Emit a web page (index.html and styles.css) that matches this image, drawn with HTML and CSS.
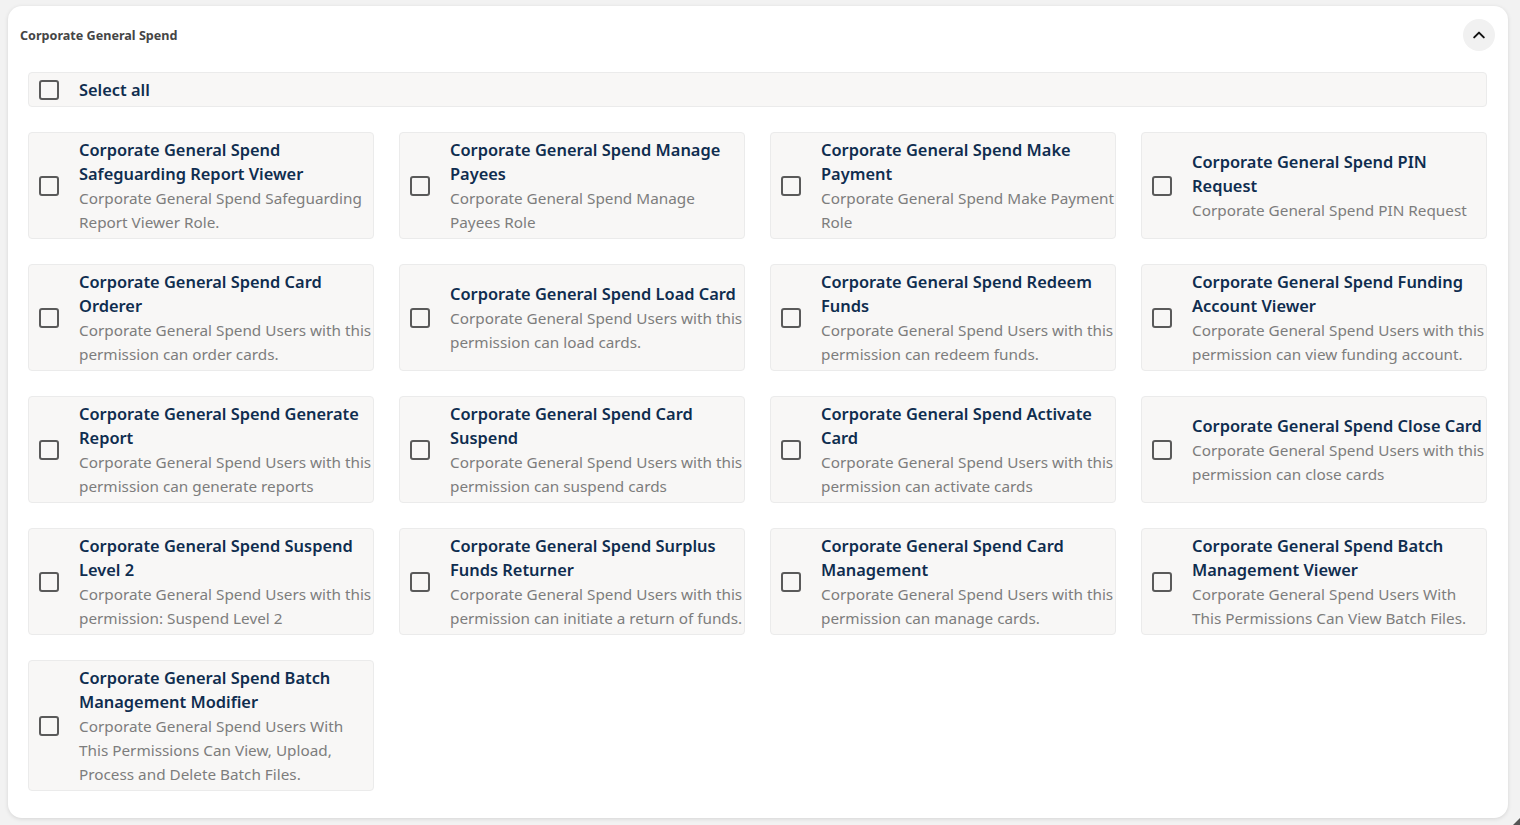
FILE: index.html
```html
<!DOCTYPE html>
<html>
<head>
<meta charset="utf-8">
<link rel="stylesheet" href="styles.css">
</head>
<body>
<div class="panel">
  <div class="panel-head">
    <span class="panel-title">Corporate General Spend</span>
    <button class="toggle" type="button" aria-label="Collapse">
      <svg width="14" height="14" viewBox="0 0 14 14"><path d="M2.2 9.4 L7 4.6 L11.8 9.4" fill="none" stroke="#111" stroke-width="2" stroke-linecap="round" stroke-linejoin="round"/></svg>
    </button>
  </div>
  <div class="select-all">
    <span class="box"></span>
    <span class="select-label">Select all</span>
  </div>
  <div class="grid">
    <div class="item"><span class="box"></span><div class="text"><div class="name">Corporate General Spend Safeguarding Report Viewer</div><div class="desc">Corporate General Spend Safeguarding Report Viewer Role.</div></div></div>
    <div class="item"><span class="box"></span><div class="text"><div class="name">Corporate General Spend Manage Payees</div><div class="desc">Corporate General Spend Manage Payees Role</div></div></div>
    <div class="item"><span class="box"></span><div class="text"><div class="name">Corporate General Spend Make Payment</div><div class="desc">Corporate General Spend Make Payment Role</div></div></div>
    <div class="item"><span class="box"></span><div class="text"><div class="name">Corporate General Spend PIN Request</div><div class="desc">Corporate General Spend PIN Request</div></div></div>

    <div class="item"><span class="box"></span><div class="text"><div class="name">Corporate General Spend Card Orderer</div><div class="desc">Corporate General Spend Users with this permission can order cards.</div></div></div>
    <div class="item"><span class="box"></span><div class="text"><div class="name">Corporate General Spend Load Card</div><div class="desc">Corporate General Spend Users with this permission can load cards.</div></div></div>
    <div class="item"><span class="box"></span><div class="text"><div class="name">Corporate General Spend Redeem Funds</div><div class="desc">Corporate General Spend Users with this permission can redeem funds.</div></div></div>
    <div class="item"><span class="box"></span><div class="text"><div class="name">Corporate General Spend Funding Account Viewer</div><div class="desc">Corporate General Spend Users with this permission can view funding account.</div></div></div>

    <div class="item"><span class="box"></span><div class="text"><div class="name">Corporate General Spend Generate Report</div><div class="desc">Corporate General Spend Users with this permission can generate reports</div></div></div>
    <div class="item"><span class="box"></span><div class="text"><div class="name">Corporate General Spend Card Suspend</div><div class="desc">Corporate General Spend Users with this permission can suspend cards</div></div></div>
    <div class="item"><span class="box"></span><div class="text"><div class="name">Corporate General Spend Activate Card</div><div class="desc">Corporate General Spend Users with this permission can activate cards</div></div></div>
    <div class="item"><span class="box"></span><div class="text"><div class="name">Corporate General Spend Close Card</div><div class="desc">Corporate General Spend Users with this permission can close cards</div></div></div>

    <div class="item"><span class="box"></span><div class="text"><div class="name">Corporate General Spend Suspend Level 2</div><div class="desc">Corporate General Spend Users with this permission: Suspend Level 2</div></div></div>
    <div class="item"><span class="box"></span><div class="text"><div class="name">Corporate General Spend Surplus Funds Returner</div><div class="desc">Corporate General Spend Users with this permission can initiate a return of funds.</div></div></div>
    <div class="item"><span class="box"></span><div class="text"><div class="name">Corporate General Spend Card Management</div><div class="desc">Corporate General Spend Users with this permission can manage cards.</div></div></div>
    <div class="item"><span class="box"></span><div class="text"><div class="name">Corporate General Spend Batch Management Viewer</div><div class="desc">Corporate General Spend Users With This Permissions Can View Batch Files.</div></div></div>

    <div class="item"><span class="box"></span><div class="text"><div class="name">Corporate General Spend Batch Management Modifier</div><div class="desc">Corporate General Spend Users With This Permissions Can View, Upload, Process and Delete Batch Files.</div></div></div>
  </div>
</div>
<div class="resize-mark"></div>
</body>
</html>
```

FILE: styles.css
```css
* { box-sizing: border-box; }
html, body { margin: 0; padding: 0; }
body {
  background: #f2f2f2;
  font-family: "Noto Sans", "Open Sans", sans-serif;
  width: 1520px;
  height: 825px;
  overflow: hidden;
  position: relative;
}
.panel {
  margin: 6px 0 0 8px;
  width: 1500px;
  height: 812px;
  background: #fff;
  border-radius: 14px;
  box-shadow: 0 1px 4px rgba(0,0,0,0.12);
  padding: 0 12px;
}
.panel-head {
  height: 58px;
  display: flex;
  align-items: center;
  justify-content: space-between;
}
.panel-title {
  font-size: 12.6px;
  font-weight: 700;
  color: #454545;
}
.toggle {
  width: 32px;
  height: 32px;
  border-radius: 50%;
  border: none;
  background: #f1f1f1;
  display: flex;
  align-items: center;
  justify-content: center;
  padding: 0;
  margin-right: 1px;
}
.select-all {
  margin: 8px 0 0 8px;
  width: 1459px;
  height: 35px;
  background: #f8f7f6;
  border: 1px solid #ebebeb;
  border-radius: 4px;
  display: flex;
  align-items: center;
  padding-left: 10px;
}
.box {
  flex: none;
  width: 20px;
  height: 20px;
  border: 2px solid #5a5a5a;
  border-radius: 3px;
  background: transparent;
}
.select-label {
  margin-left: 20px;
  font-size: 16.4px;
  font-weight: 600;
  color: #0f2d4f;
}
.grid {
  margin: 25px 0 0 8px;
  width: 1459px;
  display: grid;
  grid-template-columns: repeat(4, 346px);
  column-gap: 25px;
  row-gap: 25px;
}
.item {
  background: #f8f7f6;
  border: 1px solid #ebebeb;
  border-radius: 4px;
  display: flex;
  align-items: center;
  padding: 5px 0 4px 10px;
}
.text {
  margin-left: 20px;
  line-height: 24px;
}
.name {
  font-size: 16.4px;
  font-weight: 600;
  color: #0f2d4f;
}
.desc {
  font-size: 15.3px;
  font-weight: 400;
  color: #7d7d7d;
}
.resize-mark {
  position: absolute;
  right: 0;
  bottom: 0;
  width: 0;
  height: 0;
  border-left: 7px solid transparent;
  border-bottom: 7px solid #555;
}
```
